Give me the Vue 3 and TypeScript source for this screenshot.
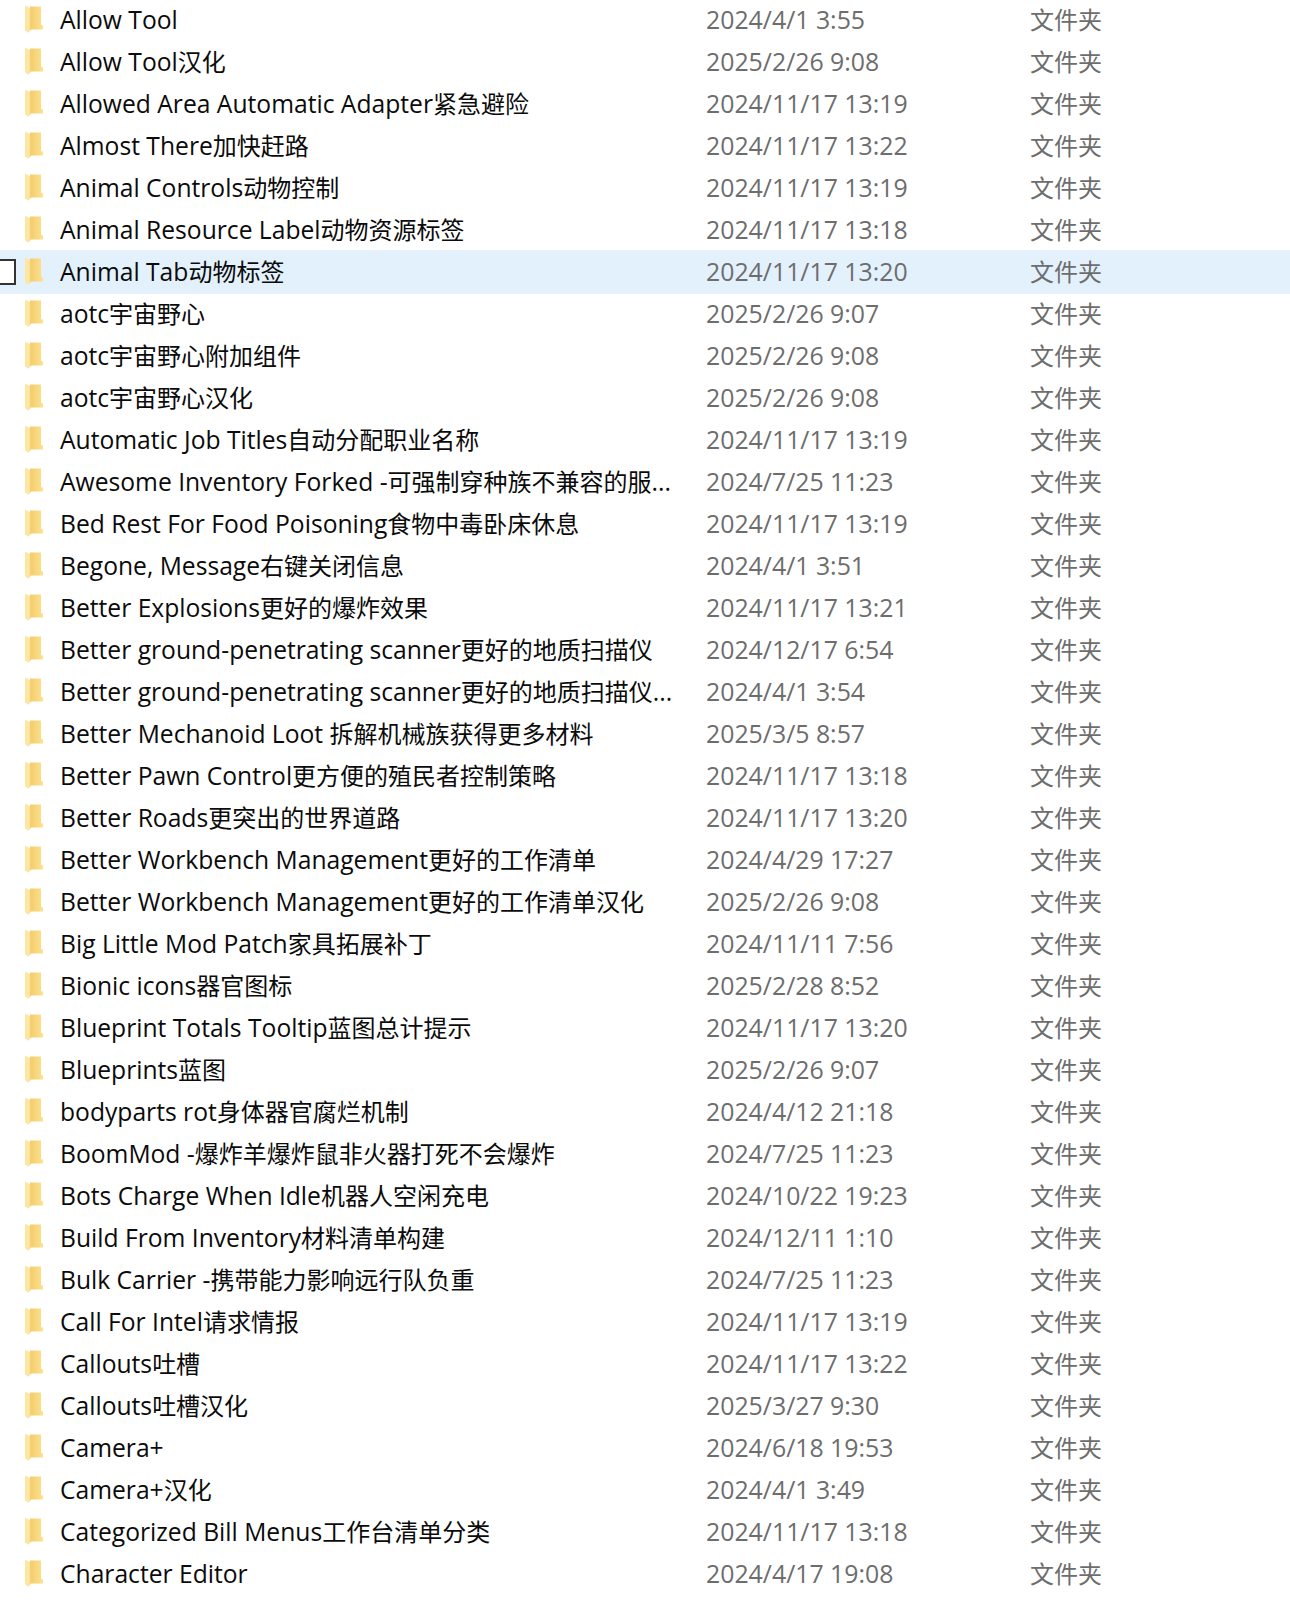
<script setup lang="ts">
interface Row { name: string; date: string; selected?: boolean }
interface Seg { text: string; cjk: boolean }
const rows: Row[] = [
  { name: 'Allow Tool', date: '2024/4/1 3:55' },
  { name: 'Allow Tool汉化', date: '2025/2/26 9:08' },
  { name: 'Allowed Area Automatic Adapter紧急避险', date: '2024/11/17 13:19' },
  { name: 'Almost There加快赶路', date: '2024/11/17 13:22' },
  { name: 'Animal Controls动物控制', date: '2024/11/17 13:19' },
  { name: 'Animal Resource Label动物资源标签', date: '2024/11/17 13:18' },
  { name: 'Animal Tab动物标签', date: '2024/11/17 13:20', selected: true },
  { name: 'aotc宇宙野心', date: '2025/2/26 9:07' },
  { name: 'aotc宇宙野心附加组件', date: '2025/2/26 9:08' },
  { name: 'aotc宇宙野心汉化', date: '2025/2/26 9:08' },
  { name: 'Automatic Job Titles自动分配职业名称', date: '2024/11/17 13:19' },
  { name: 'Awesome Inventory Forked -可强制穿种族不兼容的服...', date: '2024/7/25 11:23' },
  { name: 'Bed Rest For Food Poisoning食物中毒卧床休息', date: '2024/11/17 13:19' },
  { name: 'Begone, Message右键关闭信息', date: '2024/4/1 3:51' },
  { name: 'Better Explosions更好的爆炸效果', date: '2024/11/17 13:21' },
  { name: 'Better ground-penetrating scanner更好的地质扫描仪', date: '2024/12/17 6:54' },
  { name: 'Better ground-penetrating scanner更好的地质扫描仪...', date: '2024/4/1 3:54' },
  { name: 'Better Mechanoid Loot 拆解机械族获得更多材料', date: '2025/3/5 8:57' },
  { name: 'Better Pawn Control更方便的殖民者控制策略', date: '2024/11/17 13:18' },
  { name: 'Better Roads更突出的世界道路', date: '2024/11/17 13:20' },
  { name: 'Better Workbench Management更好的工作清单', date: '2024/4/29 17:27' },
  { name: 'Better Workbench Management更好的工作清单汉化', date: '2025/2/26 9:08' },
  { name: 'Big Little Mod Patch家具拓展补丁', date: '2024/11/11 7:56' },
  { name: 'Bionic icons器官图标', date: '2025/2/28 8:52' },
  { name: 'Blueprint Totals Tooltip蓝图总计提示', date: '2024/11/17 13:20' },
  { name: 'Blueprints蓝图', date: '2025/2/26 9:07' },
  { name: 'bodyparts rot身体器官腐烂机制', date: '2024/4/12 21:18' },
  { name: 'BoomMod -爆炸羊爆炸鼠非火器打死不会爆炸', date: '2024/7/25 11:23' },
  { name: 'Bots Charge When Idle机器人空闲充电', date: '2024/10/22 19:23' },
  { name: 'Build From Inventory材料清单构建', date: '2024/12/11 1:10' },
  { name: 'Bulk Carrier -携带能力影响远行队负重', date: '2024/7/25 11:23' },
  { name: 'Call For Intel请求情报', date: '2024/11/17 13:19' },
  { name: 'Callouts吐槽', date: '2024/11/17 13:22' },
  { name: 'Callouts吐槽汉化', date: '2025/3/27 9:30' },
  { name: 'Camera+', date: '2024/6/18 19:53' },
  { name: 'Camera+汉化', date: '2024/4/1 3:49' },
  { name: 'Categorized Bill Menus工作台清单分类', date: '2024/11/17 13:18' },
  { name: 'Character Editor', date: '2024/4/17 19:08' },
]

function segments(name: string): Seg[] {
  const parts = name.match(/[\u4e00-\u9fff]+|[^\u4e00-\u9fff]+/g) ?? []
  return parts.map((text) => ({ text, cjk: /[\u4e00-\u9fff]/.test(text) }))
}
</script>

<template>
  <div class="list">
    <div v-for="row in rows" :key="row.name" class="row" :class="{ selected: row.selected }">
      <span v-if="row.selected" class="check"></span>
      <svg class="folder" viewBox="0 0 18 27" aria-hidden="true">
        <defs>
          <linearGradient id="folder-back" x1="0" y1="0" x2="1" y2="0">
            <stop offset="0" stop-color="#f3cc6c" />
            <stop offset="1" stop-color="#fde28f" />
          </linearGradient>
          <linearGradient id="folder-flap" x1="0" y1="0" x2="1" y2="0">
            <stop offset="0" stop-color="#fbe6a4" />
            <stop offset="0.7" stop-color="#fde7a2" />
            <stop offset="1" stop-color="#f0c868" />
          </linearGradient>
        </defs>
        <path d="M5 0.5 H16 V18.5 L18 20 V23.5 H5 Z" fill="url(#folder-back)" />
        <path d="M0 0.5 L1 0 L6 2.5 V23.5 L3.5 26.8 L0 24.5 Z" fill="url(#folder-flap)" />
      </svg>
      <span class="name"><span
        v-for="seg in segments(row.name)"
        :key="seg.text"
        :class="seg.cjk ? 'cjk' : 'latin-name'"
      >{{ seg.text }}</span></span>
      <span class="date">{{ row.date }}</span>
      <span class="type">文件夹</span>
    </div>
  </div>
</template>

<style>
html, body { margin: 0; background: #fff; }
</style>

<style scoped>
.list {
  margin-top: -2px;
  height: 1610px;
  overflow: hidden;
  font-family: "Open Sans", "Noto Sans", "Noto Sans CJK SC", sans-serif;
  font-size: 24px;
}
.row {
  position: relative;
  display: grid;
  grid-template-columns: 25px 18px 17px 646px 324px 1fr;
  grid-template-areas: ". icon . name date type";
  align-items: center;
  height: 42px;
  white-space: nowrap;
}
.row.selected {
  background: #e3f1fd;
  height: 44px;
  margin-bottom: -2px;
}
.folder { grid-area: icon; width: 18px; height: 27px; }
.selected .folder { margin-bottom: 2px; }
.name { grid-area: name; color: #0b0b0b; line-height: 30px; margin-top: 2px; }
.selected .name { margin-top: 0; margin-bottom: 1px; }
.date { grid-area: date; color: #6d6d6d; font-size: 24.85px; }
.selected .date { margin-bottom: 3px; }
.type { grid-area: type; color: #6d6d6d; margin-bottom: 2px; }
.selected .type { margin-bottom: 3px; }
.latin-name { font-size: 24.65px; }
.cjk { font-size: 24px; }
.check {
  position: absolute;
  left: -10px;
  top: 9px;
  width: 22px;
  height: 22px;
  border: 2px solid #333;
  background: #fff;
}
</style>
